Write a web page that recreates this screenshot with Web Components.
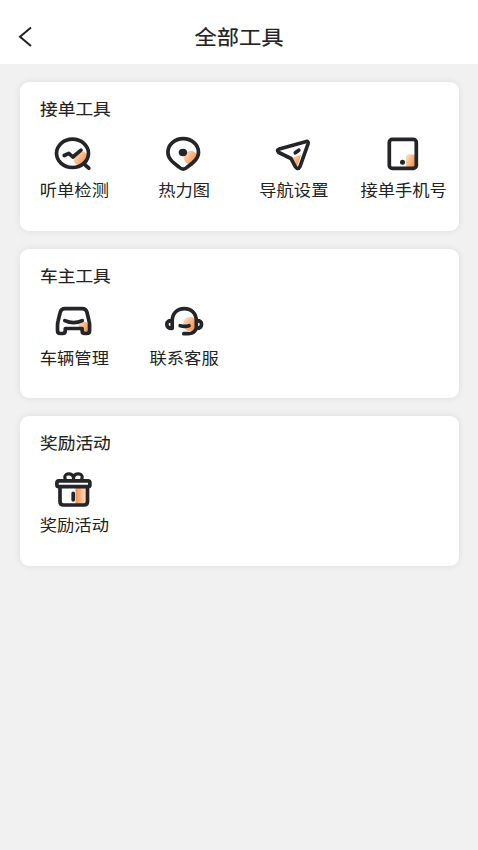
<!DOCTYPE html>
<html lang="zh-CN">
<head>
<meta charset="utf-8">
<title>全部工具</title>
<style>
html,body{margin:0;height:100%}
body{background:#f1f1f1;color:#222;font-family:"Noto Sans CJK SC",sans-serif}
</style>
</head>
<body>
<tools-page></tools-page>
<script>
const ICONS = {
  listen: `<circle cx="29" cy="26.8" r="7.5" fill="url(#g)"/><ellipse cx="20.5" cy="21.3" rx="16" ry="14.2"/><path d="M31.5 31.5l5.3 4.7M12.200 23.500l4.600-2.200 4 3.700 8.200-6.800"/>`,
  pin: `<circle cx="28.5" cy="25.5" r="6.8" fill="url(#g)"/><path d="M21.2 37.2c-1.6 0-2.9-1-4.2-2.2C11.500 30.800 5.900 27 5.900 20.300a15.300 13.700 0 0 1 30.600 0c0 6.700-5.700 10.500-11.100 14.700-1.300 1.200-2.600 2.200-4.200 2.200z"/><ellipse cx="20.900" cy="20.500" rx="4.200" ry="3.700" class="f"/>`,
  nav: `<path d="M19 26l10-3-4 12z" fill="url(#g)"/><path d="M7.300 17L33.500 9.700Q37 8.700 36 12L28 34.500Q26 38.500 23.200 34.500L19 26.500 6.800 20.500Q4 18 7.300 17zM23.300 20.800l3.500-2.600"/>`,
  phone: `<rect x="24" y="22.500" width="9.500" height="13.500" rx="2" fill="url(#g)"/><rect x="7.300" y="7.400" width="27" height="29" rx="3"/><circle cx="20.500" cy="30.300" r="2.500" class="f"/>`,
  car: `<path d="M26 27q1-5 8-4l3 3v8h-7l-1-5z" fill="url(#g)"/><path d="M12.500 9.600h17.500q3.600 0 4.600 3.400l2 8.500q.700 2.500.700 5v5q0 3-3 3h-1.700q-2.800 0-2.800-3v-2H13v2q0 3-2.800 3H8.200q-3 0-3-3v-5q0-2.500.700-5L8 13q1-3.400 4.500-3.400zM12.500 21.600q8.700 4 17.500 0" transform="translate(.3 0)"/>`,
  service: `<circle cx="28" cy="25" r="7" fill="url(#g)"/><path d="M10.200 29.300V22C10.200 14.500 15 9.700 22.300 9.700S34.300 14.500 34.300 22v7.300M10.200 21.800C3 20.500 3 30 10.200 29.300M34.300 21.800c7-1.300 7 8.200 0 7.500q-2 5.200-8 5.400h-4.500M18.200 26.700q5 1.200 8.800 0"/>`,
  gift: `<rect x="23.500" y="21" width="11" height="16" fill="url(#h)"/><rect x="4.900" y="13.900" width="33" height="5.800" rx="2"/><path d="M8 20v14.500q0 3.500 3.500 3.500h20.500q3.500 0 3.500-3.500V20M21.200 26.300v6.500"/><path d="M21.500 11.500C21.500 5.500 12.800 5.500 12.800 10q0 2 1.200 3.500M21.500 11.500C21.500 5.500 30.200 5.500 30.200 10q0 2-1.200 3.500M21.500 11.500v2" style="stroke-width:3.200"/>`
};

class ToolIcon extends HTMLElement {
  connectedCallback() {
    this.attachShadow({mode:'open'}).innerHTML = `<style>
      :host{display:block;width:44px;height:44px}
      svg{display:block;fill:none;stroke:#242528;stroke-width:3.700;stroke-linecap:round;stroke-linejoin:round}
      [fill]{stroke:none}.f{fill:#242528;stroke:none}
    </style><svg width="44" height="44" viewBox="0 0 44 44"><defs>
      <linearGradient id="g" x1="0" y1="0" x2="1" y2=".7"><stop stop-color="#fde3ce"/><stop offset="1" stop-color="#f58d3f"/></linearGradient>
      <linearGradient id="h"><stop stop-color="#f59049"/><stop offset="1" stop-color="#fde3cd"/></linearGradient>
    </defs>${ICONS[this.getAttribute('name')]}</svg>`;
  }
}
class ToolItem extends HTMLElement {
  connectedCallback() {
    this.attachShadow({mode:'open'}).innerHTML = `<style>
      :host{display:flex;flex-direction:column;align-items:center;min-width:0}
      span{font-size:17.300px;line-height:24px;white-space:nowrap;margin-top:1.300px;transform:scaleY(.93)}
    </style><tool-icon name="${this.getAttribute('icon')}"></tool-icon><span><slot></slot></span>`;
  }
}
class ToolCard extends HTMLElement {
  connectedCallback() {
    this.attachShadow({mode:'open'}).innerHTML = `<style>
      :host{display:block;box-sizing:border-box;height:149.500px;background:#fff;border-radius:9px;box-shadow:0 0 7px rgba(0,0,0,.09);padding-top:14px}
      h2{margin:0 0 0 20.500px;font-size:17.700px;line-height:24px;font-weight:400;-webkit-text-stroke:.15px #222;transform:scaleY(.93)}
      div{display:grid;grid-template-columns:repeat(4,1fr);margin-top:12.500px}
    </style><h2>${this.getAttribute('heading')}</h2><div><slot></slot></div>`;
  }
}
class NavBar extends HTMLElement {
  connectedCallback() {
    this.attachShadow({mode:'open'}).innerHTML = `<style>
      :host{display:grid;grid-template-columns:50px 1fr 50px;align-items:center;height:64px;background:#fff;padding-top:9px;box-sizing:border-box}
      h1{margin:-2px 0 0;text-align:center;font-size:22.300px;line-height:32px;font-weight:400;-webkit-text-stroke:.2px #222;transform:scaleY(.93)}
      svg{margin-left:17px;display:block}
    </style><svg width="18" height="22" viewBox="0 0 18 22" fill="none" stroke="#222" stroke-width="2"><path d="M14 1.500L3 10.700 14 20"/></svg><h1><slot></slot></h1>`;
  }
}
class ToolsPage extends HTMLElement {
  connectedCallback() {
    this.attachShadow({mode:'open'}).innerHTML = `<style>
      :host{display:block;min-height:100%}
      main{display:grid;gap:17.800px;padding:17.500px 19.500px}
    </style><nav-bar>全部工具</nav-bar><main>
      <tool-card heading="接单工具">
        <tool-item icon="listen">听单检测</tool-item><tool-item icon="pin">热力图</tool-item><tool-item icon="nav">导航设置</tool-item><tool-item icon="phone">接单手机号</tool-item>
      </tool-card>
      <tool-card heading="车主工具">
        <tool-item icon="car">车辆管理</tool-item><tool-item icon="service">联系客服</tool-item>
      </tool-card>
      <tool-card heading="奖励活动"><tool-item icon="gift">奖励活动</tool-item></tool-card>
    </main>`;
  }
}
customElements.define('tool-icon', ToolIcon);
customElements.define('tool-item', ToolItem);
customElements.define('tool-card', ToolCard);
customElements.define('nav-bar', NavBar);
customElements.define('tools-page', ToolsPage);
</script>
</body>
</html>
